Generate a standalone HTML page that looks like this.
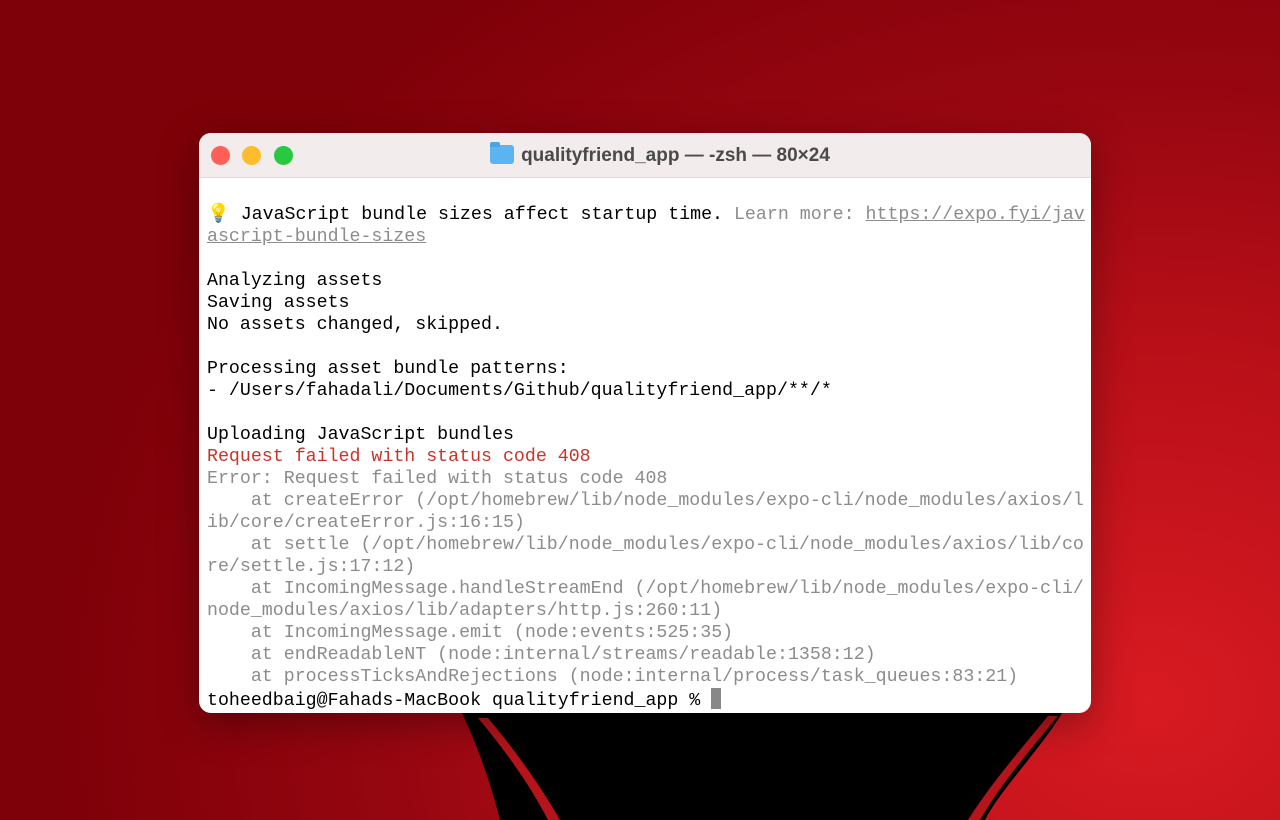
<!DOCTYPE html>
<html><head><meta charset="utf-8"><style>
html,body{margin:0;padding:0;width:1280px;height:820px;overflow:hidden}
body{position:relative;background:radial-gradient(ellipse 1100px 900px at 1150px 700px,#d81a22 0%,#b80f18 40%,#950610 70%,#7e0008 100%)}
.win{position:absolute;left:199px;top:133px;width:892px;height:580px;border-radius:12px;background:#fff;overflow:hidden;box-shadow:0 10px 40px rgba(0,0,0,.35)}
.tb{height:44px;background:#f2ecec;border-bottom:1px solid #ddd;position:relative}
.dot{position:absolute;top:13px;width:19px;height:19px;border-radius:50%}
.title{position:absolute;left:0;right:0;top:12px;text-align:center;font:bold 19px "Liberation Sans",sans-serif;color:#4a4a4a;padding-left:30px}
.fold{display:inline-block;width:24px;height:19px;vertical-align:-3px;margin-right:7px;background:#5bb4ef;border-radius:3px;position:relative}
.fold:before{content:"";position:absolute;left:0;top:-3px;width:10px;height:5px;background:#4aa4e0;border-radius:2px 2px 0 0}
pre{position:absolute;left:8px;top:71px;margin:0;font:18.27px/22px "Liberation Mono",monospace;color:#000;white-space:pre}
.g{color:#8c8c8c}.r{color:#c8342a}.u{text-decoration:underline}
.cur{display:inline-block;width:10px;height:21px;background:#888;vertical-align:-4px}
</style></head><body>
<svg style="position:absolute;left:0;top:0" width="1280" height="820">
<path d="M462,713 L1062,713 C1040,750 1000,790 985,820 L500,820 C490,780 475,740 462,713Z" fill="#000"/>
<path d="M478,718 C505,750 530,785 548,820 L560,820 C540,785 515,750 488,718Z" fill="#b5141b"/>
<path d="M1048,716 C1020,750 990,785 968,820 L980,820 C1000,785 1030,750 1058,716Z" fill="#b5141b"/>
</svg>
<div class="win">
<div class="tb">
<div class="dot" style="left:12px;background:#fe5f57"></div>
<div class="dot" style="left:43px;background:#febc2e"></div>
<div class="dot" style="left:75px;background:#28c840"></div>
<div class="title"><span class="fold"></span>qualityfriend_app — -zsh — 80×24</div>
</div>
<pre><span style="color:#e8c860">💡</span> JavaScript bundle sizes affect startup time. <span class="g">Learn more: <span class="u">https://expo.fyi/jav</span></span>
<span class="g u">ascript-bundle-sizes</span>

Analyzing assets
Saving assets
No assets changed, skipped.

Processing asset bundle patterns:
- /Users/fahadali/Documents/Github/qualityfriend_app/**/*

Uploading JavaScript bundles
<span class="r">Request failed with status code 408</span>
<span class="g">Error: Request failed with status code 408
    at createError (/opt/homebrew/lib/node_modules/expo-cli/node_modules/axios/l
ib/core/createError.js:16:15)
    at settle (/opt/homebrew/lib/node_modules/expo-cli/node_modules/axios/lib/co
re/settle.js:17:12)
    at IncomingMessage.handleStreamEnd (/opt/homebrew/lib/node_modules/expo-cli/
node_modules/axios/lib/adapters/http.js:260:11)
    at IncomingMessage.emit (node:events:525:35)
    at endReadableNT (node:internal/streams/readable:1358:12)
    at processTicksAndRejections (node:internal/process/task_queues:83:21)</span>
toheedbaig@Fahads-MacBook qualityfriend_app % <span class="cur"></span></pre>
</div>
</body></html>
